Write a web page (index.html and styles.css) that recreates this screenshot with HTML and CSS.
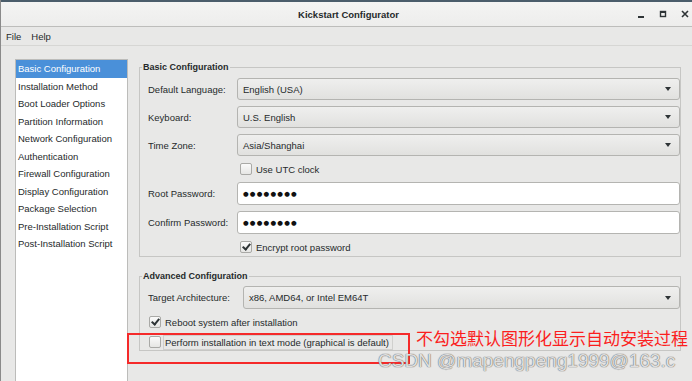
FILE: index.html
```html
<!DOCTYPE html>
<html lang="en">
<head>
    <meta charset="UTF-8">
    <title>Kickstart Configurator</title>
    <link rel="stylesheet" href="styles.css">
</head>
<body>
    <div class="window">
        <div class="titlebar">
            <span class="title">Kickstart Configurator</span>
            <div class="controls">
                <svg class="ctl" width="10" height="10" viewBox="0 0 10 10"><rect x="2" y="7" width="6" height="2" fill="#2e3436"/></svg>
                <svg class="ctl" width="10" height="10" viewBox="0 0 10 10"><rect x="2.5" y="2.5" width="5" height="5" fill="none" stroke="#2e3436" stroke-width="1.4"/><rect x="2" y="2" width="6" height="2" fill="#2e3436"/></svg>
                <svg class="ctl" width="10" height="10" viewBox="0 0 10 10"><path d="M2 2 L8 8 M8 2 L2 8" stroke="#2e3436" stroke-width="1.6"/></svg>
            </div>
        </div>
        <div class="menubar">
            <span class="menu-item">File</span>
            <span class="menu-item">Help</span>
        </div>
        <div class="main">
            <ul class="nav">
                <li class="selected">Basic Configuration</li>
                <li>Installation Method</li>
                <li>Boot Loader Options</li>
                <li>Partition Information</li>
                <li>Network Configuration</li>
                <li>Authentication</li>
                <li>Firewall Configuration</li>
                <li>Display Configuration</li>
                <li>Package Selection</li>
                <li>Pre-Installation Script</li>
                <li>Post-Installation Script</li>
            </ul>
            <div class="content">
                <fieldset class="frame basic">
                    <legend>Basic Configuration</legend>
                    <div class="row">
                        <label>Default Language:</label>
                        <div class="combo">English (USA)<span class="arrow"></span></div>
                    </div>
                    <div class="row">
                        <label>Keyboard:</label>
                        <div class="combo">U.S. English<span class="arrow"></span></div>
                    </div>
                    <div class="row">
                        <label>Time Zone:</label>
                        <div class="combo">Asia/Shanghai<span class="arrow"></span></div>
                    </div>
                    <div class="row check-row">
                        <span class="spacer"></span>
                        <span class="check"></span>
                        <span>Use UTC clock</span>
                    </div>
                    <div class="row tall">
                        <label>Root Password:</label>
                        <div class="entry">●●●●●●●●</div>
                    </div>
                    <div class="row tall">
                        <label>Confirm Password:</label>
                        <div class="entry">●●●●●●●●</div>
                    </div>
                    <div class="row check-row">
                        <span class="spacer"></span>
                        <span class="check checked"></span>
                        <span>Encrypt root password</span>
                    </div>
                </fieldset>

                <fieldset class="frame advanced">
                    <legend>Advanced Configuration</legend>
                    <div class="row tall">
                        <label class="wide">Target Architecture:</label>
                        <div class="combo">x86, AMD64, or Intel EM64T<span class="arrow"></span></div>
                    </div>
                    <div class="row check-row">
                        <span class="check checked"></span>
                        <span>Reboot system after installation</span>
                    </div>
                    <div class="row check-row focus-row">
                        <span class="check"></span>
                        <span class="focused">Perform installation in text mode (graphical is default)</span>
                    </div>
                </fieldset>
            </div>
        </div>
    </div>

    <div class="mark-box"></div>
    <div class="mark-text">不勾选默认图形化显示自动安装过程</div>
    <div class="watermark">CSDN @mapengpeng1999@163.c</div>
</body>
</html>
```

FILE: styles.css
```css
body {
    margin: 0;
    width: 692px;
    height: 381px;
    overflow: hidden;
    font-family: "Liberation Sans", Arial, sans-serif;
    font-size: 9.5px;
    color: #262a2b;
    background: #e8e8e7;
}
.window {
    height: 381px;
    border-left: 1px solid #8a8a8a;
    background: #e8e8e7;
}
.titlebar {
    height: 24px;
    border-top: 2px solid #4b5d6b;
    border-bottom: 1px solid #bdbdbb;
    background: linear-gradient(#f4f4f3, #ededec);
    display: flex;
    align-items: center;
    justify-content: center;
    position: relative;
}
.title {
    font-weight: bold;
    font-size: 9.5px;
    margin-left: 4px;
}
.controls {
    position: absolute;
    right: 2px;
    top: 7px;
    display: flex;
    gap: 12px;
}
.menubar {
    height: 18px;
    display: flex;
    align-items: center;
    padding-left: 5px;
    gap: 10px;
    border-bottom: 1px solid #d6d6d4;
}
.main {
    display: flex;
    padding: 13px 0 0 14px;
    gap: 11px;
}
.nav {
    list-style: none;
    margin: 0;
    padding: 0;
    width: 111px;
    height: 330px;
    background: #fff;
    border: 1px solid #bcbcba;
}
.nav li {
    height: 17.5px;
    line-height: 17.5px;
    padding-left: 2px;
    white-space: nowrap;
}
.nav li.selected {
    background: #4a90d9;
    color: #fff;
}
.content {
    width: 542px;
    padding-top: 2px;
}
.frame {
    margin: 0;
    border: 1px solid #c6c6c4;
    padding: 0 0 0 8px;
    display: flex;
    flex-direction: column;
    gap: 6px;
}
.frame legend {
    font-weight: bold;
    font-size: 9px;
    padding: 0 1px;
    margin-left: -6px;
    line-height: 12px;
}
.basic {
    padding-top: 5px;
    padding-bottom: 2px;
}
.advanced {
    margin-top: 13px;
    padding-top: 4px;
    padding-bottom: 0;
}
.row {
    display: flex;
    align-items: center;
    height: 22px;
}
.row.tall {
    height: 23px;
}
.row label {
    width: 89px;
    flex: none;
}
.row label.wide {
    width: 95px;
}
.combo {
    flex: 1;
    height: 100%;
    box-sizing: border-box;
    border: 1px solid #b4b4b1;
    border-radius: 3px;
    background: linear-gradient(#efefee, #e1e1df);
    display: flex;
    align-items: center;
    padding-left: 5px;
    position: relative;
}
.arrow {
    position: absolute;
    right: 8px;
    top: 50%;
    margin-top: -2px;
    border-left: 3.5px solid transparent;
    border-right: 3.5px solid transparent;
    border-top: 4px solid #2e3436;
}
.entry {
    flex: 1;
    height: 100%;
    box-sizing: border-box;
    border: 1px solid #b4b4b1;
    border-radius: 3px;
    background: #fff;
    display: flex;
    align-items: center;
    padding-left: 5px;
    font-family: "DejaVu Sans", sans-serif;
    font-size: 6.5px;
    letter-spacing: 1.2px;
    color: #111;
}
.check-row {
    height: 14px;
    gap: 4px;
}
.spacer {
    width: 88px;
    flex: none;
}
.check {
    width: 10px;
    height: 10px;
    border: 1px solid #a9a9a6;
    border-radius: 2px;
    background: linear-gradient(#fafafa, #e6e6e4);
    flex: none;
    position: relative;
}
.check.checked::after {
    content: "";
    position: absolute;
    left: 3px;
    top: 0px;
    width: 3px;
    height: 6px;
    border-right: 2px solid #2e3436;
    border-bottom: 2px solid #2e3436;
    transform: rotate(40deg);
}
.advanced .check-row {
    padding-left: 1px;
}
.focus-row {
    height: 16px;
    margin-top: -1px;
}
.focused {
    border: 1px solid #d0d0ce;
    padding: 1px 3px 1px 1px;
    margin-left: -2px;
}
.mark-box {
    position: absolute;
    left: 127px;
    top: 333px;
    width: 279px;
    height: 27px;
    border: 2px solid #f52a2a;
}
.mark-text {
    position: absolute;
    left: 416px;
    top: 327px;
    font-family: "Noto Sans CJK SC", sans-serif;
    font-size: 17px;
    line-height: 22px;
    color: #fb1e1e;
    white-space: nowrap;
}
.watermark {
    position: absolute;
    left: 378px;
    top: 350px;
    font-family: "Liberation Sans", Arial, sans-serif;
    font-size: 19px;
    line-height: 22px;
    color: rgba(245, 245, 245, 0.85);
    text-shadow: 0 0 1px #666, 0 0 1px #666;
    white-space: nowrap;
}
```
